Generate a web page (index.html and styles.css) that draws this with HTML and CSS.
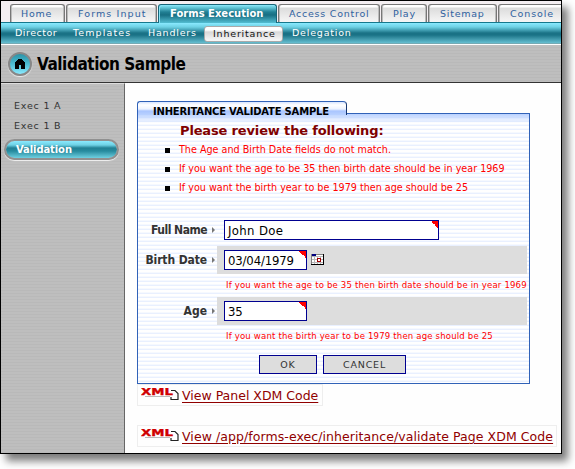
FILE: index.html
```html
<!DOCTYPE html>
<html lang="en">
<head>
<meta charset="utf-8">
<title>Validation Sample</title>
<link rel="stylesheet" href="styles.css">
</head>
<body>
<div class="window">
  <nav class="tabs">
    <a class="tab t-home"><span>Home</span></a>
    <a class="tab t-input"><span>Forms Input</span></a>
    <a class="tab t-exec active"><span>Forms Execution</span></a>
    <a class="tab t-access"><span>Access Control</span></a>
    <a class="tab t-play"><span>Play</span></a>
    <a class="tab t-sitemap"><span>Sitemap</span></a>
    <a class="tab t-console"><span>Console</span></a>
  </nav>
  <nav class="subnav">
    <a class="s-dir">Director</a>
    <a class="s-tem">Templates</a>
    <a class="s-han">Handlers</a>
    <a class="s-inh current">Inheritance</a>
    <a class="s-del">Delegation</a>
  </nav>
  <header class="title-bar">
    <span class="home"><svg width="12" height="12" viewBox="0 0 12 12" shape-rendering="crispEdges"><path d="M1 4h1V3h1V2h1V1h4v1h1v1h1v1h1v7H7V7H5v4H1z"/></svg></span>
    <h1>Validation Sample</h1>
  </header>
  <div class="main">
    <aside class="sidebar">
      <a class="side-link">Exec 1 A</a>
      <a class="side-link">Exec 1 B</a>
      <a class="side-current"><span>Validation</span></a>
    </aside>
    <main class="content">
      <section class="panel-wrap">
        <div class="panel">
          <h2 class="panel-tab"><span>INHERITANCE VALIDATE SAMPLE</span></h2>
          <h3 class="review">Please review the following:</h3>
          <ul class="errors">
            <li><span class="e1">The Age and Birth Date fields do not match.</span></li>
            <li><span class="e2">If you want the age to be 35 then birth date should be in year 1969</span></li>
            <li><span class="e3">If you want the birth year to be 1979 then age should be 25</span></li>
          </ul>
          <div class="row">
            <label class="l-name">Full Name</label><i class="arrow"></i>
            <div class="cell plain"><span class="field wide">John Doe</span></div>
          </div>
          <div class="row">
            <label class="l-birth">Birth Date</label><i class="arrow"></i>
            <div class="cell"><span class="field date">03/04/1979</span>
              <svg class="cal" width="13" height="12" viewBox="0 0 13 12" shape-rendering="crispEdges"><path fill="#fff" d="M0 0h13v11H0z"/><path fill="#b8b8b8" d="M0 2h12v1H0zM0 5h12v1H0zM0 8h12v1H0zM3 2h1v9H3zM6 2h1v9H6zM9 2h1v9H9z"/><path fill="#808080" d="M0 0h1v11H0z"/><path fill="#000" d="M12 0h1v11h-1zM0 10h13v1H0z"/><path fill="#000080" d="M1 0h4v2H1z"/><path fill="#808080" d="M5 0h7v1H5z"/><path fill="#a00000" d="M6 4h4v4H6z"/><path fill="#fff" d="M7 5h2v2H7z"/></svg>
            </div>
          </div>
          <p class="note n1">If you want the age to be 35 then birth date should be in year 1969</p>
          <div class="row">
            <label class="l-age">Age</label><i class="arrow"></i>
            <div class="cell"><span class="field date">35</span></div>
          </div>
          <p class="note n2">If you want the birth year to be 1979 then age should be 25</p>
          <div class="buttons"><button class="ok">OK</button><button class="cancel">CANCEL</button></div>
        </div>
      </section>
      <div class="xml first">
        <svg class="xml-icon" width="38" height="14" viewBox="0 0 38 14"><path d="M4 8.5h25" stroke="#bbb"/><path d="M30 2.5h4l3 3v6h-7V9" fill="#fff" stroke="#222" stroke-width="1.2"/><text class="xml-text" x="0" y="6.6" textLength="32" lengthAdjust="spacingAndGlyphs">XML</text></svg>
        <a class="x1">View Panel XDM Code</a>
      </div>
      <div class="xml second">
        <svg class="xml-icon" width="38" height="14" viewBox="0 0 38 14"><path d="M4 8.5h25" stroke="#bbb"/><path d="M30 2.5h4l3 3v6h-7V9" fill="#fff" stroke="#222" stroke-width="1.2"/><text class="xml-text" x="0" y="6.6" textLength="32" lengthAdjust="spacingAndGlyphs">XML</text></svg>
        <a class="x2">View /app/forms-exec/inheritance/validate Page XDM Code</a>
      </div>
    </main>
  </div>
</div>
</body>
</html>
```

FILE: styles.css
```css
* { box-sizing: border-box; }
html, body { margin: 0; width: 575px; height: 469px; overflow: hidden; background: #fff; }
body { font-family: "DejaVu Sans", "Liberation Sans", sans-serif; font-size: 9.5px; white-space: nowrap; }
h1, h2, h3, ul, p { margin: 0; padding: 0; }
.window { width: 562px; height: 454px; border: 1px solid #000; background: #fefefe; box-shadow: 6px 7px 8px 0 #7c7c7c; overflow: hidden; }

.tabs { height: 22px; display: flex; padding: 3px 0 0 9px; gap: 1px; background: #f4eff2; border-bottom: 1px solid #16788c; }
.tab { flex: none; height: 18px; border: 1px solid #777; border-bottom: 0; border-radius: 3px 3px 0 0; background: linear-gradient(#fff 0, #fff 2px, #dcdcdc 3px, #f6f6f6 17px); box-shadow: inset 1px 0 #bbb, inset -1px 0 #bbb; color: #2f619f; line-height: 18px; padding-left: 10px; letter-spacing: .75px; }
.t-home { width: 55px; }
.t-input { width: 91px; padding-left: 11px; letter-spacing: 1.1px; }
.t-exec { width: 119px; padding-left: 11px; font-size: 10px; }
.t-access { width: 102px; padding-left: 10px; }
.t-play { width: 46px; padding-left: 11px; }
.t-sitemap { width: 69px; padding-left: 11px; }
.t-console { width: 70px; padding-left: 11px; letter-spacing: .9px; }
.tab.active { height: 19px; color: #fff; font-weight: bold; letter-spacing: 0; border-color: #176477; background: linear-gradient(#86e4f7 0, #6ccfe0 2px, #218094 7px, #176f83 10px, #53bdd1 18px); box-shadow: inset 1px 1px #86e4f7; }
.subnav { height: 21px; display: flex; background: linear-gradient(#8aeaff 0, #6ed1e4 4px, #1a7286 10px, #1a7286 12px, #6fc8da 21px); color: #fff; line-height: 20px; border-bottom: 1px solid #75aab4; letter-spacing: .8px; }
.subnav a { flex: none; }
.s-dir { width: 58px; margin-left: 14px; letter-spacing: .5px; }
.s-tem { width: 75px; letter-spacing: 1.1px; }
.s-han { width: 56px; }
.s-inh { width: 79px; }
.subnav .current { margin-top: 3px; height: 16px; line-height: 14px; border: 1px solid #aaa; border-radius: 3px; padding-left: 8px; color: #111; background: linear-gradient(#fff 3px, #d8d8d8 5px, #f8f8f8 14px); }
.s-del { margin-left: 9px; }
.title-bar { height: 39px; display: flex; align-items: center; border-top: 1px solid #fff; border-bottom: 1px solid #333; background: repeating-linear-gradient(#bebebe 0, #bebebe 2px, #b9b9b9 2px, #b9b9b9 3px); }
.home { flex: none; width: 24px; height: 24px; margin: 0 0 0 7px; border-radius: 50%; border: 2px solid #888; box-shadow: 0 1px 1px #eee; background: linear-gradient(#2b93a8, #4dbbd0 50%, #8aeaff); display: flex; align-items: center; justify-content: center; }
h1 { margin-left: 5px; font: bold 17px/34px "DejaVu Sans Condensed", "DejaVu Sans", sans-serif; letter-spacing: -.45px; color: #000; }
.main { display: flex; height: 370px; }
.sidebar { width: 124px; flex: none; border-right: 1px solid #666; border-top: 1px solid #ddd; background: repeating-linear-gradient(#bebebe 0, #bebebe 2px, #b9b9b9 2px, #b9b9b9 3px); padding-top: 12px; }
.side-link { display: block; height: 20px; line-height: 20px; padding-left: 13px; color: #333; letter-spacing: .8px; }
.side-current { display: block; margin: 3px 0 0 3px; width: 115px; height: 21px; border-radius: 11px; border: 2px solid #909090; box-shadow: 0 1px 1px #f2f2f2; background: linear-gradient(#8aeaff 0, #6ed1e4 4px, #218094 7px, #278b9e 10px, #6fd0e1 17px) padding-box; color: #fff; font-size: 10px; font-weight: bold; line-height: 18px; padding-left: 10px; letter-spacing: -.1px; }
.content { flex: 1; padding: 30px 0 0 12px; }

.panel { position: relative; width: 393px; height: 271px; border: 1px solid #3162b8; padding-top: 9px; background: linear-gradient(#b9d1ff, rgba(185, 209, 255, 0) 9px), repeating-linear-gradient(#fff 0, #fff 2px, #f6f9ff 2px, #f6f9ff 3px, #e9f0ff 3px, #e9f0ff 4px); }
.panel-tab { position: absolute; left: -1px; top: -13px; width: 210px; height: 14px; border: 1px solid #3162b8; border-right-color: #16366f; border-bottom: 0; border-radius: 3px 4px 0 0; background: linear-gradient(#d9e6ff, #fff 3px, #edf3ff 7px, #a9c5ff 9px, #b9d1ff); padding-left: 15px; font-size: 10px; line-height: 20px; color: #000; letter-spacing: -.2px; }
.review { margin-left: 42px; font-size: 13px; line-height: 15px; height: 17px; color: #800000; letter-spacing: -.15px; }
.errors { list-style: none; font-family: "DejaVu Sans Condensed", "DejaVu Sans", sans-serif; font-size: 10.7px; color: #f00; }
.errors li { display: flex; align-items: center; height: 19px; }
.errors li::before { content: ""; width: 5px; height: 5px; background: #000; margin: 1px 9px 0 27px; }
.row { display: flex; align-items: center; height: 28px; margin-top: 23px; }
.errors + .row { margin-top: 19px; }
.errors + .row + .row { margin-top: 2px; }
.row label { width: 69px; text-align: right; font: bold 12px/28px "DejaVu Sans Condensed", "DejaVu Sans", sans-serif; color: #333; }
.row .l-name { letter-spacing: -.5px; }
.row .l-birth { letter-spacing: -.1px; }
.arrow { width: 0; height: 0; margin: 0 2px 0 5px; border: solid transparent; border-width: 3px 0 3px 3px; border-left-color: #777; }
.cell { width: 310px; height: 28px; background: #ddd; display: flex; align-items: center; padding-left: 7px; }
.cell.plain { background: none; }
.field { height: 20px; border: 1px solid #000090; background: linear-gradient(45deg, transparent 50%, #f00 50%) right top / 7px 7px no-repeat #fff; padding-left: 3px; font: 13px/19px "DejaVu Sans Condensed", "DejaVu Sans", sans-serif; color: #000; }
.wide { width: 215px; letter-spacing: .35px; }
.date { width: 83px; letter-spacing: -.15px; }
.cal { margin-left: 4px; }
.note { margin-left: 88px; height: 22px; margin-bottom: -22px; font: 9.5px/22px "DejaVu Sans Condensed", "DejaVu Sans", sans-serif; letter-spacing: .17px; color: #f00; }
.buttons { display: flex; gap: 6px; padding: 30px 0 0 121px; }
button { height: 19px; border: 1px solid #000090; background: #ddd; padding: 0; font: 9.5px/17px "DejaVu Sans", sans-serif; color: #333; letter-spacing: .8px; }
.ok { width: 58px; }
.cancel { width: 83px; }
.xml { height: 22px; border: 1px solid #eee; display: flex; padding-left: 3px; color: #900000; font-size: 12.5px; line-height: 21px; }
.xml.first { width: 186px; }
.xml.second { width: 420px; margin-top: 19px; }
.xml-icon { margin: 3px 3px 0 0; flex: none; }
.xml-text { font: bold 8px "DejaVu Sans", sans-serif; fill: #d00000; stroke: #d00000; stroke-width: .3; }
.xml a { text-decoration: underline; text-underline-offset: 2px; }
.x2 { letter-spacing: .07px; }
```
